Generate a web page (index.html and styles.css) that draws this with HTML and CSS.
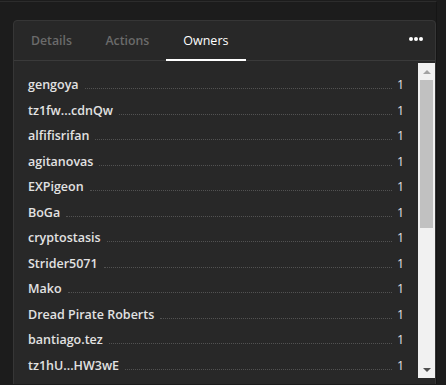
FILE: index.html
```html
<!DOCTYPE html>
<html>
<head>
<meta charset="utf-8">
<link rel="stylesheet" href="styles.css">
</head>
<body>
<div class="page">
  <div class="card">
    <div class="tabs">
      <div class="tab">Details</div>
      <div class="tab">Actions</div>
      <div class="tab active">Owners</div>
      <div class="spacer"></div>
      <div class="more"><span></span><span></span><span></span></div>
    </div>
    <div class="body">
      <div class="list">
        <div class="row"><span class="name">gengoya</span><span class="leader"></span><span class="count">1</span></div>
        <div class="row"><span class="name">tz1fw...cdnQw</span><span class="leader"></span><span class="count">1</span></div>
        <div class="row"><span class="name">alfifisrifan</span><span class="leader"></span><span class="count">1</span></div>
        <div class="row"><span class="name">agitanovas</span><span class="leader"></span><span class="count">1</span></div>
        <div class="row"><span class="name">EXPigeon</span><span class="leader"></span><span class="count">1</span></div>
        <div class="row"><span class="name">BoGa</span><span class="leader"></span><span class="count">1</span></div>
        <div class="row"><span class="name">cryptostasis</span><span class="leader"></span><span class="count">1</span></div>
        <div class="row"><span class="name">Strider5071</span><span class="leader"></span><span class="count">1</span></div>
        <div class="row"><span class="name">Mako</span><span class="leader"></span><span class="count">1</span></div>
        <div class="row"><span class="name">Dread Pirate Roberts</span><span class="leader"></span><span class="count">1</span></div>
        <div class="row"><span class="name">bantiago.tez</span><span class="leader"></span><span class="count">1</span></div>
        <div class="row"><span class="name">tz1hU...HW3wE</span><span class="leader"></span><span class="count">1</span></div>
      </div>
      <div class="scrollbar">
        <div class="arrow up"></div>
        <div class="track"><div class="thumb"></div></div>
        <div class="arrow down"></div>
      </div>
    </div>
  </div>
</div>
</body>
</html>
```
FILE: styles.css
```css
html, body {
  margin: 0;
  padding: 0;
  background: #1c1c1c;
  overflow: hidden;
}
.page {
  height: 383px;
  box-sizing: border-box;
  margin-top: 1px;
  border-top: 1px solid #2c2c2c;
  padding: 18px 0 0 13px;
  width: 437px;
  border-right: 1px solid #151515;
  overflow: hidden;
}
.card {
  width: 423px;
  height: 370px;
  box-sizing: border-box;
  background: #282828;
  border: 1px solid #363636;
  border-radius: 4px;
  font-family: "Open Sans", sans-serif;
}
.tabs {
  display: flex;
  align-items: stretch;
  height: 39px;
  border-bottom: 1px solid #3a3a3a;
}
.tab {
  padding: 0 16.5px 0 17px;
  display: flex;
  align-items: center;
  font-size: 12.3px;
  font-weight: 600;
  color: #6b6b6b;
  border-bottom: 2px solid transparent;
  margin-bottom: -1px;
}
.tab.active {
  color: #ffffff;
  font-size: 12.5px;
  font-weight: 500;
  padding: 0 17.5px 0 17.5px;
  border-bottom-color: #ffffff;
}
.spacer { flex: 1; }
.more {
  display: flex;
  align-items: center;
  gap: 1px;
  padding: 0 12px 3px 0;
}
.more span {
  width: 4px;
  height: 4px;
  border-radius: 50%;
  background: #fff;
}
.body {
  display: flex;
  padding-top: 2px;
}
.list {
  flex: 1;
  height: 315px;
  overflow: hidden;
  padding: 13px 14px 0 14px;
  box-sizing: border-box;
}
.row {
  display: flex;
  align-items: baseline;
  height: 25.5px;
  font-size: 12.5px;
  font-weight: 600;
  color: #e2e2e2;
}
.leader {
  flex: 1;
  border-bottom: 1px dotted #525252;
  margin: 0 5px 0 6px;
}
.count {
  font-weight: 500;
  width: 7px;
  text-align: right;
}
.scrollbar {
  width: 17px;
  height: 315px;
  background: #f1f1f1;
  display: flex;
  flex-direction: column;
}
.arrow {
  height: 17px;
  display: flex;
  align-items: center;
  justify-content: center;
}
.arrow::before {
  content: "";
  border-left: 4px solid transparent;
  border-right: 4px solid transparent;
}
.arrow.up::before { border-bottom: 4px solid #a3a3a3; }
.arrow.down::before { border-top: 4px solid #505050; }
.track {
  flex: 1;
  padding: 0 2px;
}
.thumb {
  height: 148px;
  background: #c1c1c1;
}
```
